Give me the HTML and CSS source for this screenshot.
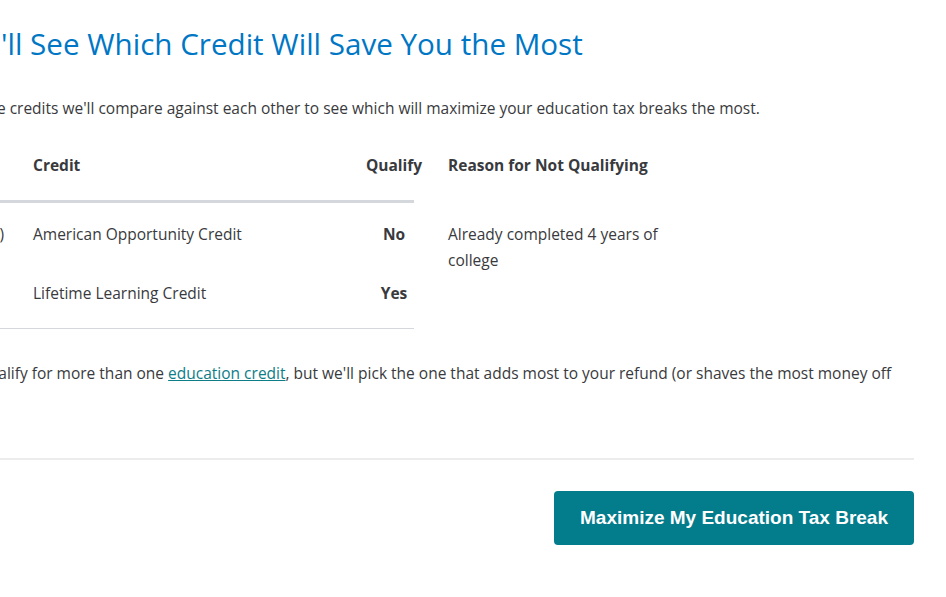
FILE: index.html
```
<!DOCTYPE html>
<html>
  <head>
    <title>Education Credits</title>
    <link rel="stylesheet" href="styles.css">
  </head>
  <body>
    <main class="page">
      <h1 class="title">We'll See Which Credit Will Save You the Most</h1>
      <p class="intro">Here are the credits we'll compare against each other to see which will maximize your education tax breaks the most.</p>

      <div class="compare">
        <div class="cell head pick"></div>
        <div class="cell head name">Credit</div>
        <div class="cell head qualify"><span>Qualify</span></div>
        <div class="cell head reason">Reason for Not Qualifying</div>

        <div class="cell pick">(1)</div>
        <div class="cell name">American Opportunity Credit</div>
        <div class="cell qualify"><b>No</b></div>
        <div class="cell reason">Already completed 4 years of college</div>

        <div class="cell pick last"></div>
        <div class="cell name last">Lifetime Learning Credit</div>
        <div class="cell qualify last"><b>Yes</b></div>
        <div class="cell reason"></div>
      </div>

      <p class="note">You may qualify for more than one <a href="#">education credit</a>, but we'll pick the one that adds most to your refund (or shaves the most money off your taxes).</p>

      <div class="actions">
        <button class="btn">Maximize My Education Tax Break</button>
      </div>
    </main>
  </body>
</html>
```

FILE: styles.css
```
body {
  margin: 0;
  font-family: "Open Sans", "Lato", sans-serif;
  color: #393a3d;
  background: #fff;
  overflow: hidden;
}

.page {
  margin-left: -85px;
  width: 999px;
  padding-top: 24px;
}

.title {
  font-size: 29.6px;
  font-weight: 400;
  line-height: 40px;
  color: #0077c5;
  margin: 0 0 0 42px;
}

.intro {
  font-size: 15.5px;
  line-height: 26px;
  margin: 31px 0 0 0;
}

.compare {
  display: grid;
  grid-template-columns: 118px 341px 40px 274px;
  grid-template-rows: auto 59px 67px;
  margin-top: 13px;
  font-size: 15.5px;
  line-height: 26px;
}

.cell {
  padding-top: 18px;
}

.head {
  font-weight: 700;
  padding-top: 18px;
  padding-bottom: 22px;
}

.pick, .name, .qualify {
  border-bottom: 0 solid #d4d7dc;
}

.head.pick, .head.name, .head.qualify {
  border-bottom-width: 3px;
}

.last {
  border-bottom-width: 1px !important;
}

.pick {
  text-align: right;
  padding-right: 29px;
}

.qualify {
  display: flex;
  justify-content: center;
  white-space: nowrap;
}

.reason {
  padding-left: 34px;
}

.note {
  font-size: 15.5px;
  line-height: 26px;
  margin: 31px 0 0 -2px;
  padding-right: 9px;
}

.note a {
  color: #0d7d88;
}

.actions {
  display: flex;
  justify-content: flex-end;
  border-top: 2px solid #ececec;
  margin-top: 46px;
  padding-top: 31px;
}

.btn {
  font-family: "Liberation Sans", Arial, sans-serif;
  font-size: 19px;
  font-weight: 700;
  color: #fff;
  background: #037c8c;
  border: none;
  border-radius: 4px;
  height: 54px;
  padding: 0 26px;
}
```
